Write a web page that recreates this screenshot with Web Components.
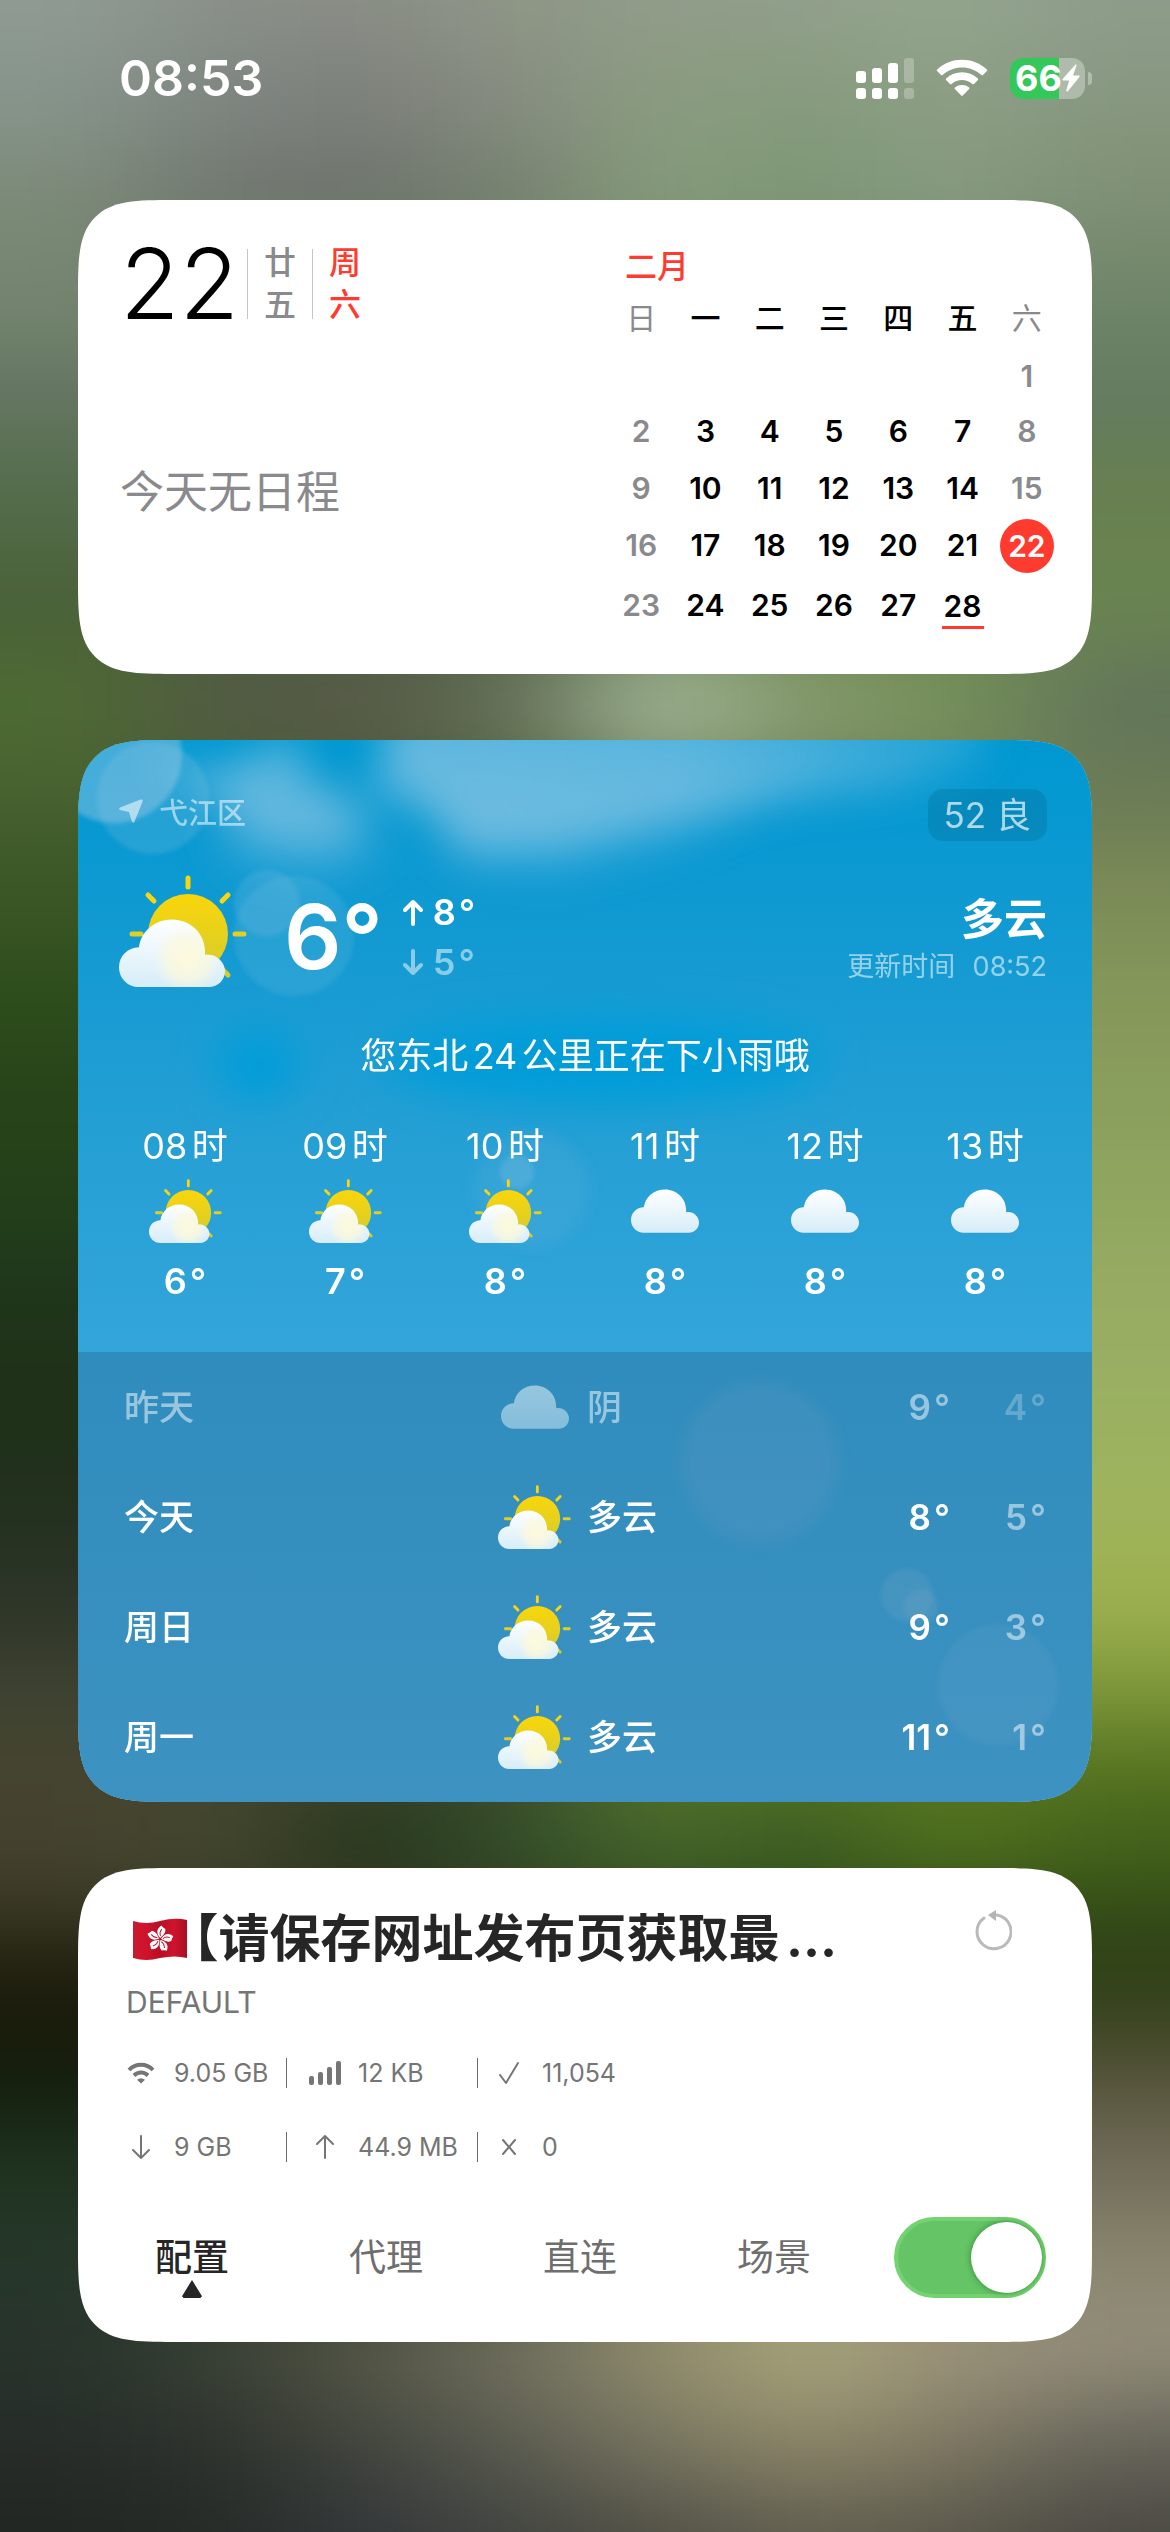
<!DOCTYPE html>
<html lang="zh-CN">
<head>
<meta charset="utf-8">
<meta name="viewport" content="width=device-width, initial-scale=1">
<title>小组件</title>
<style>
    body {
        margin: 0;
        min-height: 100vh;
        background: #2a3029;
        font-family: "Inter", "Noto Sans CJK SC", sans-serif;
        text-autospace: normal;
    }

    main {
        display: flex;
        flex-direction: column;
        gap: 66px;
        padding: 44px 78px 190px;
    }
</style>
</head>
<body>

<wall-paper></wall-paper>
<status-bar time="08:53" battery="66"></status-bar>
<main>
    <widget-card><calendar-widget></calendar-widget></widget-card>
    <widget-card><weather-widget></weather-widget></widget-card>
    <widget-card><proxy-widget></proxy-widget></widget-card>
</main>

<script>
//small helper, every element is cloned from a template
function makeTemplate(html){
    var t = document.createElement("template");
    t.innerHTML = html;
    return t;
}

//---------- WALLPAPER ----------
//each row: y start, then colours spread evenly over the width
var wall_rows = [
    [-200, "#8f9b93", "#8a9089", "#898d86", "#8f9787", "#919c89", "#919f8c", "#94a68e", "#8e9c8b"],
    [50, "#86948b", "#7e857f", "#7c7f7b", "#868c80", "#8a9c80", "#869a7c", "#8c9f85", "#879780"],
    [150, "#7c8a78", "#70766f", "#6d736b", "#74806e", "#869b7b", "#7b9674", "#869b80", "#7e8f74"],
    [250, "#74846f", "#6f8568"],
    [350, "#637560", "#647b60"],
    [450, "#536c4a", "#68804f"],
    [550, "#4a6138", "#6a8450"],
    [650, "#4e6a33", "#535a45", "#57594a", "#66705a", "#a4b89b", "#84996d", "#76925a", "#62755a"],
    [760, "#46602f", "#6c7c55"],
    [850, "#3a5624", "#7d8c57"],
    [950, "#2d4d1c", "#85985a"],
    [1050, "#274319", "#8a9e5d"],
    [1150, "#22401a", "#90a760"],
    [1250, "#1f351b", "#98ab62"],
    [1350, "#1f3118", "#9ab062"],
    [1450, "#22301e", "#9fb45c"],
    [1550, "#2d3528", "#9db050"],
    [1650, "#3f4332", "#7c9638"],
    [1730, "#45452f", "#587521"],
    [1790, "#454230", "#45492f", "#22351b", "#30502a", "#47692f", "#3b5d24", "#53741e", "#45641b"],
    [1880, "#3b3a24", "#304a16"],
    [1940, "#1d1c0c", "#324019"],
    [2040, "#131d0c", "#57543c"],
    [2120, "#1f3320", "#706c58"],
    [2210, "#26382a", "#89856e"],
    [2290, "#27332b", "#3a4236", "#555646", "#706f5f", "#908c6c", "#a8a57b", "#9a917a", "#918c78"],
    [2400, "#272c28", "#2d322d", "#42463e", "#5a5b50", "#777460", "#8b8667", "#7e7862", "#66645a"],
    [2490, "#222623", "#262a27", "#32363a", "#414440", "#504f45", "#615e50", "#5a574b", "#4a4942"],
    [2700]
];

class WallPaper extends HTMLElement {
    constructor(){
        super();
        this.attachShadow({mode:"open"});
    }

    connectedCallback(){
        var rects = "";
        for (var i = 0; i < wall_rows.length - 1; i++) {
            var y = wall_rows[i][0];
            var h = wall_rows[i + 1][0] - y + 1;
            var colors = wall_rows[i].slice(1);
            var w = 1170 / colors.length;
            colors.forEach(function(color, n){
                //outer cells run past the edge so the blur has something to take
                var x1 = n === 0 ? -300 : n * w;
                var x2 = n === colors.length - 1 ? 1470 : (n + 1) * w + 1;
                rects += `<rect x="${x1}" y="${y}" width="${x2 - x1}" height="${h}" fill="${color}"/>`;
            });
        }
        this.shadowRoot.innerHTML = `
        <style>
            :host { position: absolute; inset: 0; z-index: -1; overflow: hidden; }
            svg { display: block; width: 100%; height: 100%; }
        </style>
        <svg viewBox="0 0 1170 2532" preserveAspectRatio="none" aria-hidden="true">
            <filter id="soft" filterUnits="userSpaceOnUse" x="-300" y="-200" width="1770" height="2900" color-interpolation-filters="sRGB">
                <feGaussianBlur stdDeviation="66 40"/>
            </filter>
            <g filter="url(#soft)">${rects}</g>
        </svg>`;
    }
}
customElements.define("wall-paper", WallPaper);

//---------- STATUS BAR ----------
var template_status = makeTemplate(`
<style>
    :host {
        display: flex;
        align-items: center;
        justify-content: space-between;
        height: 156px;
        padding: 0 78px 0 119px;
        color: #fff;
    }
    time { font-size: 50px; line-height: 60px; font-weight: 600; }
    .icons { display: flex; align-items: center; gap: 22px; }
    svg { display: block; }
    .battery { display: flex; align-items: center; gap: 3px; }
    .cell {
        display: flex;
        align-items: center;
        justify-content: center;
        width: 75px;
        height: 41px;
        border-radius: 13px;
        background: linear-gradient(90deg, #34c759 66%, rgba(255,255,255,.32) 66%);
    }
    .cell b { font-size: 36px; line-height: 41px; font-weight: 700; }
    .nub { width: 4px; height: 13px; border-radius: 0 6px 6px 0; background: rgba(255,255,255,.35); }
</style>
<time></time>
<div class="icons">
    <svg width="58" height="41" viewBox="0 0 58 41" fill="#fff" aria-hidden="true">
        <rect x="0" y="13" width="10" height="12" rx="3"/><rect x="0" y="30" width="10" height="11" rx="3"/>
        <rect x="16" y="10" width="10" height="15" rx="3"/><rect x="16" y="30" width="10" height="11" rx="3"/>
        <rect x="32" y="5" width="10" height="20" rx="3"/><rect x="32" y="30" width="10" height="11" rx="3"/>
        <g opacity=".25"><rect x="48" y="0" width="10" height="25" rx="3"/><rect x="48" y="30" width="10" height="11" rx="3"/></g>
    </svg>
    <svg width="52" height="38" viewBox="0 0 52 38" fill="#fff" aria-hidden="true">
        <path d="M1.1 10.4C15 -2.6 37 -2.6 50.900 10.4Q51.600 11.200 50.900 12L47 16Q46.200 16.700 45.400 16C34.500 5.900 17.500 5.900 6.600 16Q5.800 16.700 5 16L1.100 12Q.4 11.200 1.100 10.400Z"/>
        <path d="M10.100 19.500C19 11.300 33 11.300 41.900 19.500Q42.600 20.300 41.900 21.100L38 25Q37.200 25.700 36.400 25C30.500 19.800 21.500 19.800 15.600 25Q14.800 25.700 14 25L10.100 21.100Q9.400 20.300 10.100 19.500Z"/>
        <path d="M18.900 28.500C22.800 25.200 29.200 25.200 33.100 28.500Q33.900 29.300 33.100 30.100L26.800 36.500Q26 37.200 25.200 36.500L18.900 30.100Q18.100 29.300 18.900 28.500Z"/>
    </svg>
    <div class="battery">
        <div class="cell">
            <b></b>
            <svg width="18" height="28" viewBox="0 0 18 28" fill="#fff" aria-hidden="true"><path d="M13.300 .8L.6 15Q-.2 16.300 1.300 16.500H7.200L4.200 26.300Q4.200 28 5.900 27.200L17.400 13Q18.200 11.700 16.700 11.400H11L14.500 1.600Q14.500 .2 13.300 .8Z"/></svg>
        </div>
        <div class="nub"></div>
    </div>
</div>
`);

class StatusBar extends HTMLElement {
    constructor(){
        super();
        this.attachShadow({mode:"open"});
    }

    connectedCallback(){
        this.shadowRoot.appendChild(template_status.content.cloneNode(true));
        this.shadowRoot.querySelector("time").textContent = this.getAttribute("time");
        this.shadowRoot.querySelector("b").textContent = this.getAttribute("battery");
    }
}
customElements.define("status-bar", StatusBar);

//---------- CARD ----------
var template_card = makeTemplate(`
<style>
    :host {
        display: block;
        overflow: hidden;
        border-radius: 64px;
        background: #fff;
    }
    @supports (corner-shape: squircle) {
        :host { border-radius: 95px; corner-shape: superellipse(1.8); }
    }
</style>
<slot></slot>
`);

class WidgetCard extends HTMLElement {
    constructor(){
        super();
        this.attachShadow({mode:"open"});
    }

    connectedCallback(){
        this.shadowRoot.appendChild(template_card.content.cloneNode(true));
    }
}
customElements.define("widget-card", WidgetCard);

//---------- CALENDAR ----------
var template_calendar = makeTemplate(`
<style>
    :host { display: flex; justify-content: space-between; color: #000; }
    .today { display: flex; flex-direction: column; padding: 40px 0 18px 42px; }
    .date { display: flex; align-items: center; height: 88px; }
    .num { font-size: 97px; line-height: 88px; font-weight: 300; padding-right: 8px; }
    .word {
        box-sizing: border-box;
        width: 65px;
        padding: 0 16px;
        border-left: 1px solid #c6c6c8;
        font-size: 32px;
        line-height: 42px;
        height: 70px;
        display: flex;
        align-items: center;
        font-weight: 500;
        color: #8a8a8e;
    }
    .red { color: #ff3b30; }
    .none { flex: 1; display: flex; align-items: center; margin: 0; font-size: 44px; line-height: 60px; color: #8a8a8e; }
    .month { padding: 44px 33px 38px 0; }
    table { border-collapse: collapse; table-layout: fixed; width: 450px; font-size: 30px; font-weight: 600; }
    caption { padding-left: 16px; text-align: left; font-size: 32px; line-height: 46px; font-weight: 500; color: #ff3b30; }
    th, td { padding: 0; text-align: center; line-height: 54px; height: 57px; }
    th { height: 56px; padding-bottom: 5px; font-weight: 500; line-height: 56px; }
    tr.first td { height: 51px; line-height: 51px; }
    tr.last td { height: 63px; }
    th:first-child, th:last-child { font-weight: 400; color: #8a8a8e; }
    td:first-child, td:last-child { color: #8a8a8e; }
    td span { display: inline-block; position: relative; width: 54px; height: 54px; line-height: 54px; vertical-align: middle; }
    .now { border-radius: 50%; background: #ff3b30; color: #fff; }
    .mark::after { content: ""; position: absolute; left: 6px; right: 6px; bottom: 4px; height: 3px; background: #ff3b30; }
</style>
<div class="today">
    <div class="date">
        <div class="num">22</div>
        <div class="word">廿五</div>
        <div class="word red">周六</div>
    </div>
    <p class="none">今天无日程</p>
</div>
<div class="month">
    <table>
        <caption>二月</caption>
        <thead><tr></tr></thead>
        <tbody></tbody>
    </table>
</div>
`);

class CalendarWidget extends HTMLElement {
    constructor(){
        super();
        this.attachShadow({mode:"open"});
        this.today = 22;
        this.marked = 28;
        this.days = 28;
        this.offset = 6; //the 1st is a saturday
    }

    connectedCallback(){
        this.shadowRoot.appendChild(template_calendar.content.cloneNode(true));
        var head = this.shadowRoot.querySelector("thead tr");
        "日一二三四五六".split("").forEach(function(d){
            head.innerHTML += `<th scope="col">${d}</th>`;
        });

        var html = "";
        for (var row = 0; row < 5; row++) {
            html += `<tr class="${row === 0 ? "first" : row === 4 ? "last" : ""}">`;
            for (var col = 0; col < 7; col++) {
                html += `<td>${this.cell(row * 7 + col - this.offset + 1)}</td>`;
            }
            html += "</tr>";
        }
        this.shadowRoot.querySelector("tbody").innerHTML = html;
    }

    cell(day){
        if (day < 1 || day > this.days) return "";
        if (day === this.today) return `<span class="now">${day}</span>`;
        if (day === this.marked) return `<span class="mark">${day}</span>`;
        return day;
    }
}
customElements.define("calendar-widget", CalendarWidget);

//---------- WEATHER ICON ----------
var cloud_path = "M20 112C8.500 112 0 103 0 92.200C0 81.200 8.500 72.500 20 72.300C22 56.500 35.500 44.500 53 44.500C71.500 44.500 86 58.500 86 77V80C96.500 78 106 86.500 106 96C106 105 99 112 90 112Z";

class WeatherIcon extends HTMLElement {
    constructor(){
        super();
        this.attachShadow({mode:"open"});
    }

    connectedCallback(){
        var defs = `<defs>
            <linearGradient id="cloud" x1="0" y1="0" x2="0" y2="1"><stop offset="0" stop-color="#fff"/><stop offset="1" stop-color="#d6edf8"/></linearGradient>
            <linearGradient id="sun" x1="0" y1="0" x2="0" y2="1"><stop offset="0" stop-color="#fad60a"/><stop offset="1" stop-color="#d3cc2e"/></linearGradient>
            <radialGradient id="glow" gradientUnits="userSpaceOnUse" cx="68" cy="84" r="34"><stop offset="0" stop-color="#fdf9dc"/><stop offset=".6" stop-color="#fdf9dc" stop-opacity=".7"/><stop offset="1" stop-color="#fdf9dc" stop-opacity="0"/></radialGradient>
        </defs>`;
        var cloud = `<path d="${cloud_path}" fill="url(#cloud)"/>`;
        var sunny = `<svg class="sun" viewBox="0 0 128 112" aria-hidden="true">${defs}
            <g stroke-width="5" stroke-linecap="round">
                <path stroke="#f8d50c" d="M69 3V12M29 20L35 26M109 20L103 26"/>
                <path stroke="#e2cf22" d="M13 59H22M116 59H125"/>
                <path stroke="#d6cc2c" d="M104 95L109 100"/>
            </g>
            <circle cx="69" cy="59" r="40" fill="url(#sun)"/>
            ${cloud}<path d="${cloud_path}" fill="url(#glow)"/>
        </svg>`;
        var cloudy = `<svg class="cloud" viewBox="0 44 106 68" aria-hidden="true">${defs}${cloud}</svg>`;
        this.shadowRoot.innerHTML = `
        <style>
            :host { display: flex; align-items: center; justify-content: center; width: 73px; height: 64px; }
            :host([large]) { width: 128px; height: 112px; }
            svg { display: block; }
            .sun { width: 100%; height: 100%; }
            .cloud { width: 68px; height: 44px; }
        </style>` + (this.getAttribute("kind") === "cloud" ? cloudy : sunny);
    }
}
customElements.define("weather-icon", WeatherIcon);

//---------- WEATHER ----------
var template_weather = makeTemplate(`
<style>
    :host { display: block; position: relative; background: #1c9cd4; color: #fff; }
    .sky { position: absolute; inset: 0; width: 100%; height: 100%; }
    .now, .days { position: relative; }
    svg { display: block; }
    .now { padding: 49px 0 47px; }
    .top { display: flex; align-items: flex-start; justify-content: space-between; padding: 0 45px 0 41px; }
    .place { display: flex; align-items: center; gap: 16px; height: 44px; font-size: 29px; font-weight: 500; color: rgba(255,255,255,.54); }
    .aqi { padding: 0 16px; border-radius: 15px; font-size: 35px; line-height: 52px; color: rgba(255,255,255,.68); background: rgba(0,60,90,.16); }
    .current { display: flex; align-items: center; height: 124px; padding: 0 45px 0 41px; margin-top: 34px; }
    .current weather-icon { align-self: flex-start; }
    .temp { margin-left: 37px; font-size: 90px; line-height: 100px; font-weight: 600; }
    .range { margin-left: 20px; font-size: 36px; line-height: 50px; font-weight: 600; }
    .range div { display: flex; align-items: center; gap: 10px; }
    .deg { margin-left: 3px; font-weight: 500; }
    .dim { opacity: .5; }
    .text { margin-left: auto; padding-top: 12px; text-align: right; }
    .text h2 { margin: 0; font-size: 43px; line-height: 48px; font-weight: 700; }
    .text p { margin: 0; font-size: 27px; line-height: 48px; color: rgba(255,255,255,.55); }
    .text time { margin-left: 14px; }
    .tip { margin: 27px 0 0; text-align: center; font-size: 36px; line-height: 60px; }
    .hours { display: grid; grid-template-columns: repeat(6, 1fr); margin: 36px 0 0; padding: 0 27px; list-style: none; }
    .hours li { display: flex; flex-direction: column; align-items: center; }
    .hours span { font-size: 36px; line-height: 48px; }
    .hours weather-icon { margin: 9px 0 14px; }
    .hours b { font-size: 36px; line-height: 48px; font-weight: 600; }
    .days { padding: 0 46px 10px; background: rgba(32,64,96,.24); }
    table { width: 100%; table-layout: fixed; border-collapse: collapse; font-size: 35px; font-weight: 500; }
    th, td { padding: 0; height: 110px; line-height: 48px; text-align: left; font-weight: 500; }
    th { width: 374px; }
    .cond { display: flex; align-items: center; gap: 16px; }
    .hi { width: 96px; text-align: right; font-weight: 600; }
    .lo { width: 96px; text-align: right; font-weight: 600; color: rgba(255,255,255,.5); }
</style>
<svg class="sky" viewBox="0 0 1014 1062" preserveAspectRatio="none" aria-hidden="true">
    <defs>
        <linearGradient id="air" x1="0" y1="0" x2="0" y2="1">
            <stop offset="0" stop-color="#0098d1"/><stop offset=".2" stop-color="#149ad2"/>
            <stop offset=".36" stop-color="#239fd4"/><stop offset=".57" stop-color="#33a5da"/>
            <stop offset="1" stop-color="#46ade0"/>
        </linearGradient>
        <linearGradient id="fade" x1="0" y1="0" x2="1" y2="0">
            <stop offset="0" stop-color="#a5cfe8" stop-opacity=".6"/><stop offset=".5" stop-color="#a5cfe8" stop-opacity=".55"/>
            <stop offset="1" stop-color="#a5cfe8" stop-opacity=".2"/>
        </linearGradient>
        <filter id="b1" x="-50%" y="-50%" width="200%" height="200%"><feGaussianBlur stdDeviation="20"/></filter>
        <filter id="b2" x="-50%" y="-50%" width="200%" height="200%"><feGaussianBlur stdDeviation="2"/></filter>
        <filter id="b3" x="-50%" y="-50%" width="200%" height="200%"><feGaussianBlur stdDeviation="7"/></filter>
    </defs>
    <rect width="1014" height="1062" fill="url(#air)"/>
    <g filter="url(#b1)" fill="#009dd9">
        <ellipse cx="525" cy="320" rx="220" ry="44"/>
        <ellipse cx="180" cy="325" rx="40" ry="34"/>
    </g>
    <g filter="url(#b1)">
        <path fill="#a5cfe8" opacity=".5" d="M70 20L140 30L215 -5L235 45L285 75L265 110L180 105L140 60Z"/>
        <path fill="#a5cfe8" opacity=".16" d="M130 40H290L310 120L230 150L140 120Z"/>
        <path fill="url(#fade)" d="M310 -30H905V20L820 50L700 60L590 85L480 110L390 112L350 70L300 50Z"/>
        <path fill="#a5cfe8" opacity=".14" d="M340 30H760L600 110L480 140L370 130Z"/>
    </g>
    <g fill="#b9d3e8" filter="url(#b2)">
        <circle cx="36" cy="15" r="68" opacity=".36"/>
        <circle cx="75" cy="58" r="56" opacity=".16"/>
        <circle cx="189" cy="163" r="33" opacity=".15"/>
        <circle cx="216" cy="196" r="60" opacity=".12"/>
        <circle cx="439" cy="432" r="17" opacity=".18"/>
        <circle cx="829" cy="855" r="26" opacity=".16"/>
        <circle cx="843" cy="867" r="17" opacity=".16"/>
        <circle cx="920" cy="945" r="60" opacity=".1"/>
    </g>
    <g fill="#b9c3e0" filter="url(#b3)">
        <circle cx="454" cy="450" r="58" opacity=".09"/>
        <circle cx="682" cy="722" r="80" opacity=".13"/>
    </g>
</svg>
<section class="now">
    <div class="top">
        <div class="place">
            <svg width="24" height="24" viewBox="0 0 24 24" fill="currentColor" aria-hidden="true"><path d="M21.600 .5L1 8.600Q-.7 9.800 1 10.900L10 13L12.800 22.500Q14 24.600 15.500 22.700L23.700 2.300Q24 .2 21.600 .5Z"/></svg>
            <span>弋江区</span>
        </div>
        <div class="aqi">52 良</div>
    </div>
    <div class="current">
        <weather-icon large kind="sun"></weather-icon>
        <div class="temp">6°</div>
        <div class="range">
            <div><svg width="20" height="27" viewBox="0 0 20 27" fill="none" stroke="#fff" stroke-width="4" stroke-linecap="round" stroke-linejoin="round" aria-hidden="true"><path d="M10 25V3M2 11L10 3L18 11"/></svg><span>8<span class="deg">°</span></span></div>
            <div class="dim"><svg width="20" height="27" viewBox="0 0 20 27" fill="none" stroke="#fff" stroke-width="4" stroke-linecap="round" stroke-linejoin="round" aria-hidden="true"><path d="M10 2V24M2 16L10 24L18 16"/></svg><span>5<span class="deg">°</span></span></div>
        </div>
        <div class="text">
            <h2>多云</h2>
            <p>更新时间<time>08:52</time></p>
        </div>
    </div>
    <p class="tip">您东北24公里正在下小雨哦</p>
    <ul class="hours"></ul>
</section>
<section class="days"><table><tbody></tbody></table></section>
`);

class WeatherWidget extends HTMLElement {
    constructor(){
        super();
        this.attachShadow({mode:"open"});
        this.hours = [
            ["08", "sun", 6], ["09", "sun", 7], ["10", "sun", 8],
            ["11", "cloud", 8], ["12", "cloud", 8], ["13", "cloud", 8]
        ];
        this.days = [
            ["昨天", "cloud", "阴", 9, 4],
            ["今天", "sun", "多云", 8, 5],
            ["周日", "sun", "多云", 9, 3],
            ["周一", "sun", "多云", 11, 1]
        ];
    }

    connectedCallback(){
        var deg = `<span class="deg">°</span>`;
        this.shadowRoot.appendChild(template_weather.content.cloneNode(true));
        this.shadowRoot.querySelector(".hours").innerHTML = this.hours.map(function(h){
            return `<li><span>${h[0]}时</span><weather-icon kind="${h[1]}"></weather-icon><b>${h[2]}${deg}</b></li>`;
        }).join("");
        this.shadowRoot.querySelector("tbody").innerHTML = this.days.map(function(d, i){
            return `<tr class="${i === 0 ? "dim" : ""}">
                <th scope="row">${d[0]}</th>
                <td><div class="cond"><weather-icon kind="${d[1]}"></weather-icon>${d[2]}</div></td>
                <td class="hi">${d[3]}${deg}</td>
                <td class="lo">${d[4]}${deg}</td>
            </tr>`;
        }).join("");
    }
}
customElements.define("weather-widget", WeatherWidget);

//---------- STAT (icon + slotted value) ----------
var stat_icons = {
    wifi: `<svg width="28" height="24" viewBox="0 0 28 24" fill="none" stroke="currentColor" stroke-width="4"><path d="M2 9C8.500 2 19.500 2 26 9M7 14.500C11 10.500 17 10.500 21 14.500"/><path fill="currentColor" stroke="none" d="M14 22.500L10 18.800Q14 15.600 18 18.800Z"/></svg>`,
    bars: `<svg width="32" height="24" viewBox="0 0 32 24" fill="currentColor"><rect x="0" y="15" width="5" height="9" rx="2"/><rect x="9" y="11" width="5" height="13" rx="2"/><rect x="18" y="6" width="5" height="18" rx="2"/><rect x="27" y="0" width="5" height="24" rx="2"/></svg>`,
    check: `<svg width="20" height="24" viewBox="0 0 20 24" fill="none" stroke="currentColor" stroke-width="2" stroke-linecap="round" stroke-linejoin="round"><path d="M1 14L7 22L19 2"/></svg>`,
    down: `<svg width="18" height="24" viewBox="0 0 18 24" fill="none" stroke="currentColor" stroke-width="2" stroke-linecap="round" stroke-linejoin="round"><path d="M9 1V23M1 15L9 23L17 15"/></svg>`,
    up: `<svg width="18" height="24" viewBox="0 0 18 24" fill="none" stroke="currentColor" stroke-width="2" stroke-linecap="round" stroke-linejoin="round"><path d="M9 23V1M1 9L9 1L17 9"/></svg>`,
    cross: `<svg width="14" height="24" viewBox="0 0 14 24" fill="none" stroke="currentColor" stroke-width="2" stroke-linecap="round"><path d="M1 5L13 19M13 5L1 19"/></svg>`
};

class StatItem extends HTMLElement {
    constructor(){
        super();
        this.attachShadow({mode:"open"});
    }

    connectedCallback(){
        this.shadowRoot.innerHTML = `
        <style>
            :host { display: flex; align-items: center; gap: 17px; height: 30px; font-size: 25px; line-height: 30px; color: #757575; }
            i { display: flex; justify-content: center; width: 32px; }
            svg { display: block; }
        </style>
        <i aria-hidden="true">${stat_icons[this.getAttribute("icon")]}</i><span><slot></slot></span>`;
    }
}
customElements.define("stat-item", StatItem);

//---------- PROXY ----------
var template_proxy = makeTemplate(`
<style>
    :host { display: block; padding: 41px 46px 44px 17px; color: #262626; }
    svg { display: block; }
    button { padding: 0; border: 0; background: none; font: inherit; cursor: pointer; }
    header { display: flex; align-items: flex-start; justify-content: space-between; padding: 0 34px 0 38px; }
    h2 { display: flex; align-items: center; margin: 0; font-size: 51px; line-height: 60px; font-weight: 700; }
    h2 svg { margin-right: 6px; }
    .half { font-feature-settings: "halt"; }
    .mode { margin: 15px 0 0; padding-left: 31px; font-size: 30px; line-height: 36px; color: #757575; }
    .stats { display: grid; grid-template-columns: 161px 191px auto; row-gap: 44px; margin-top: 38px; padding-left: 30px; }
    .stats stat-item:nth-child(3n+2) { padding-left: 22px; border-left: 1px solid #6b6b6b; }
    .stats stat-item:nth-child(3n) { padding-left: 15px; border-left: 1px solid #6b6b6b; }
    .bar { display: flex; align-items: stretch; gap: 23px; height: 81px; margin-top: 55px; }
    nav { flex: 1; display: grid; grid-template-columns: repeat(4, 1fr); }
    nav button { position: relative; font-size: 37px; line-height: 48px; color: #6e6e6e; }
    nav button[aria-current] { font-weight: 500; color: #262626; }
    nav button[aria-current]::after {
        content: "";
        position: absolute;
        left: calc(50% - 10px);
        bottom: 0;
        width: 20px;
        height: 18px;
        background: #262626;
        clip-path: polygon(50% 0, 100% 90%, 92% 100%, 8% 100%, 0 90%);
    }
    input {
        appearance: none;
        box-sizing: border-box;
        flex: none;
        width: 152px;
        height: 81px;
        margin: 0;
        padding: 1px 0;
        border: 4px solid #74d271;
        border-radius: 41px;
        background: #64c466;
    }
    input::before {
        content: "";
        display: block;
        width: 71px;
        height: 71px;
        margin-left: auto;
        border-radius: 50%;
        background: #fff;
        box-shadow: 0 0 6px rgba(0,80,0,.5);
    }
</style>
<header>
    <h2>
        <svg width="54" height="42" viewBox="0 0 54 42" role="img" aria-label="香港">
            <defs><linearGradient id="cloth" x1="0" y1="0" x2="1" y2="0"><stop offset="0" stop-color="#c81b30"/><stop offset=".25" stop-color="#d0122b"/><stop offset=".5" stop-color="#b80f25"/><stop offset=".75" stop-color="#cf142d"/><stop offset="1" stop-color="#a80f22"/></linearGradient></defs>
            <path d="M0 3Q13 7 27 3Q42 -1 54 2V40Q42 37 27 40Q13 44 0 40Z" fill="url(#cloth)"/>
            <g fill="#fff" id="flower"></g>
        </svg>
        <span class="half">【</span><span>请保存网址发布页获取最...</span>
    </h2>
    <button type="button" aria-label="刷新">
        <svg width="38" height="42" viewBox="0 0 38 42" fill="none" aria-hidden="true">
            <path d="M10 9A17 17 0 1 0 23 6" stroke="#bababa" stroke-width="3" stroke-linecap="round"/>
            <path d="M14 6L22 1V12Z" fill="#b4b4b4"/>
        </svg>
    </button>
</header>
<p class="mode">DEFAULT</p>
<div class="stats">
    <stat-item icon="wifi">9.05 GB</stat-item>
    <stat-item icon="bars">12 KB</stat-item>
    <stat-item icon="check">11,054</stat-item>
    <stat-item icon="down">9 GB</stat-item>
    <stat-item icon="up">44.9 MB</stat-item>
    <stat-item icon="cross">0</stat-item>
</div>
<div class="bar">
    <nav>
        <button type="button" aria-current="true">配置</button>
        <button type="button">代理</button>
        <button type="button">直连</button>
        <button type="button">场景</button>
    </nav>
    <input type="checkbox" role="switch" aria-label="开关" checked>
</div>
`);

class ProxyWidget extends HTMLElement {
    constructor(){
        super();
        this.attachShadow({mode:"open"});
    }

    connectedCallback(){
        this.shadowRoot.appendChild(template_proxy.content.cloneNode(true));
        //five petals round the middle of the flag
        var petals = "";
        for (var a = 10; a < 370; a += 72) {
            petals += `<g transform="translate(27 21) rotate(${a})">
                <path d="M0 -1C-4 -4 -6 -9 -1 -13.500C1 -12 1.500 -11.500 3.500 -11C4.500 -7 3 -5 0 -1Z"/>
                <path d="M0 -3Q-2 -6 0 -10" fill="none" stroke="#c4122a"/>
            </g>`;
        }
        this.shadowRoot.querySelector("#flower").innerHTML = petals;

        //only one tab is current at a time
        var tabs = this.shadowRoot.querySelectorAll("nav button");
        tabs.forEach(function(tab){
            tab.addEventListener("click", function(){
                tabs.forEach(function(t){ t.removeAttribute("aria-current"); });
                tab.setAttribute("aria-current", "true");
            });
        });
    }
}
customElements.define("proxy-widget", ProxyWidget);
</script>
</body>
</html>
